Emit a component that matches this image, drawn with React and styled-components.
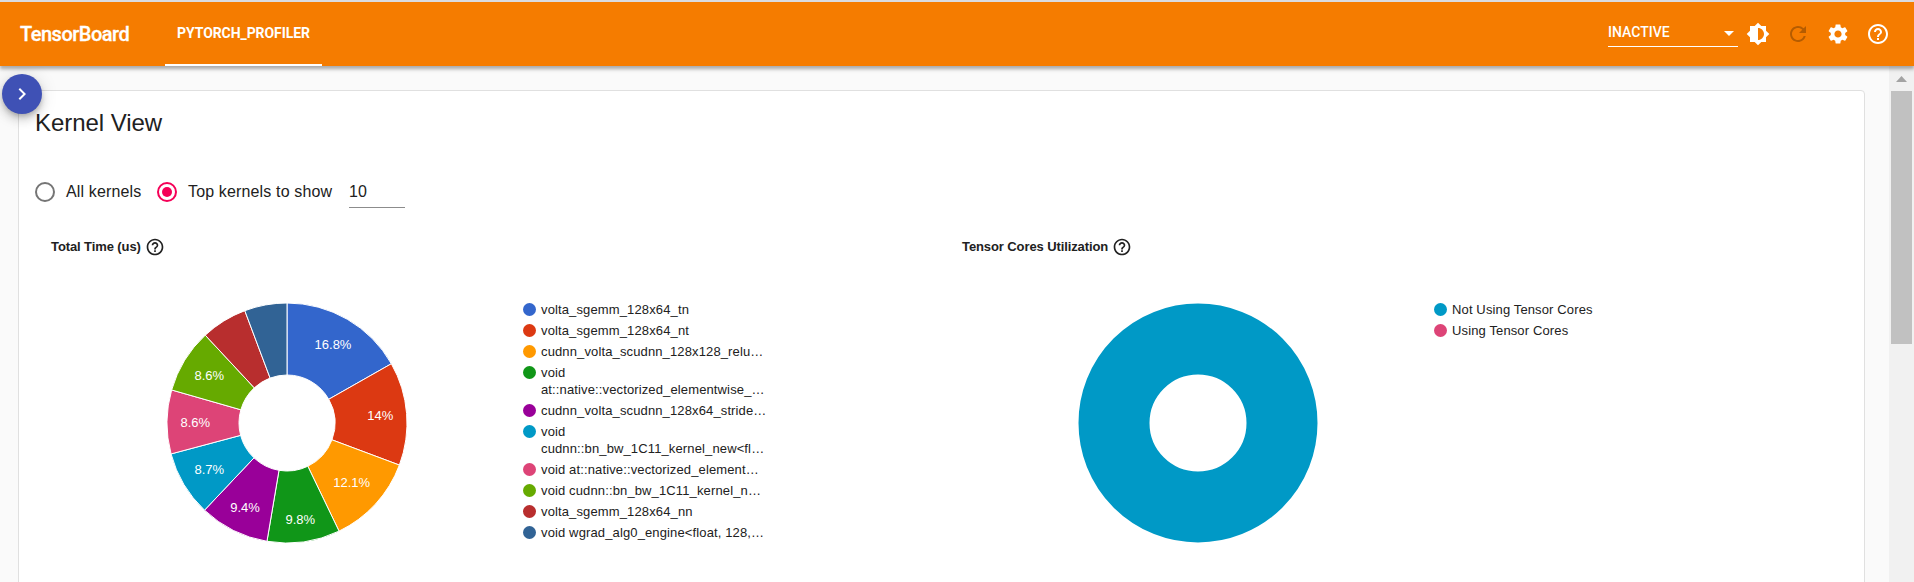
import React from "react";
import styled, { createGlobalStyle } from "styled-components";
import {
  MdBrightness6,
  MdRefresh,
  MdSettings,
  MdHelpOutline,
  MdChevronRight,
} from "react-icons/md";

const GlobalStyle = createGlobalStyle`
  * { box-sizing: border-box; }
  body {
    margin: 0;
    overflow: hidden;
    background: #fafafa;
    color: #212121;
    font-family: "Liberation Sans", Arial, sans-serif;
  }
`;

const Page = styled.div`
  display: flex;
  flex-direction: column;
  height: 582px;
  border-top: 2px solid #dadce0;
`;

const Header = styled.header`
  position: relative;
  z-index: 2;
  flex: none;
  display: flex;
  align-items: center;
  height: 64px;
  padding: 0 24px 0 20px;
  background: #f57c00;
  color: #fff;
  font-family: Roboto, sans-serif;
  box-shadow: 0 3px 3px rgba(0, 0, 0, 0.25), 0 4px 5px rgba(0, 0, 0, 0.08);
`;

const Brand = styled.div`
  width: 145px;
  font-size: 20px;
  font-weight: 500;
  line-height: 24px;
  letter-spacing: -0.5px;
  -webkit-text-stroke: 0.3px #fff;
`;

const Tab = styled.div`
  display: flex;
  align-items: center;
  justify-content: center;
  width: 157px;
  height: 64px;
  border-bottom: 2px solid #fff;
  font-size: 14px;
  font-weight: 700;
  letter-spacing: -0.07px;
`;

const Select = styled.div`
  display: flex;
  align-items: center;
  justify-content: space-between;
  width: 130px;
  height: 29px;
  margin: 0 8px 3px auto;
  padding-right: 4px;
  border-bottom: 1px solid #fff;
  font-size: 14px;
  font-weight: 500;
`;

const Caret = styled.span`
  border: 5px solid transparent;
  border-top-color: #fff;
  border-bottom: 0;
  margin-top: 3px;
`;

const Actions = styled.div`
  display: flex;
  gap: 16px;
`;

const Action = styled.span`
  display: flex;
  font-size: 24px;
  color: ${(p) => (p.$disabled ? "rgba(0, 0, 0, 0.26)" : "#fff")};
`;

const Body = styled.div`
  position: relative;
  flex: 1;
  display: flex;
  min-height: 0;
`;

const Main = styled.main`
  flex: 1;
  padding: 24px 24px 0 18px;
`;

const Card = styled.section`
  height: 520px;
  padding: 16px 17px 0 16px;
  border: 1px solid #e0e0e0;
  border-radius: 4px;
  background: #fff;
`;

const Title = styled.h1`
  margin: 0;
  font-size: 24px;
  font-weight: 400;
  line-height: 32px;
  letter-spacing: -0.05px;
`;

const Controls = styled.div`
  display: flex;
  align-items: center;
  height: 34px;
  margin-top: 36px;
  font-size: 16px;
  letter-spacing: 0.15px;
`;

const Radio = styled.span`
  display: grid;
  place-items: center;
  width: 20px;
  height: 20px;
  border: 2px solid ${(p) => (p.$on ? "#f50057" : "#757575")};
  border-radius: 50%;
  &::after {
    content: "";
    width: 10px;
    height: 10px;
    border-radius: 50%;
    background: ${(p) => (p.$on ? "#f50057" : "transparent")};
  }
`;

const RadioGroup = styled.label`
  display: flex;
  align-items: center;
  gap: 11px;
  width: ${(p) => p.$w}px;
`;

const NumberField = styled.div`
  width: 56px;
  height: 32px;
  border-bottom: 1px solid #8c8c8c;
  line-height: 31px;
`;

const Charts = styled.div`
  display: grid;
  grid-template-columns: 911px 1fr;
  padding: 28px 0 0 16px;
`;

const ChartTitle = styled.div`
  display: flex;
  align-items: center;
  gap: 4px;
  height: 20px;
  font-size: 13px;
  font-weight: 700;
  letter-spacing: -0.1px;
  svg { font-size: 20px; }
`;

const ChartName = styled.span`
  padding-bottom: 2px;
`;

const ChartBody = styled.div`
  display: flex;
  align-items: flex-start;
  padding: 46px 0 0 116px;
`;

const Donut = styled.svg`
  flex: none;
  width: 240px;
  height: 240px;
  font-size: 13px;
`;

const Legend = styled.ul`
  margin: 0 0 0 116px;
  padding: 0;
  list-style: none;
  font-size: 13px;
  line-height: 17px;
  letter-spacing: 0.13px;
`;

const LegendItem = styled.li`
  display: flex;
  gap: 5px;
  margin-bottom: 4px;
  white-space: pre;
`;

const Dot = styled.span`
  flex: none;
  width: 13px;
  height: 13px;
  border-radius: 50%;
  background: ${(p) => p.$color};
`;

const LegendText = styled.span`
  margin-top: -2px;
  margin-bottom: 2px;
`;

const Fab = styled.button`
  position: absolute;
  z-index: 1;
  left: 2px;
  top: 8px;
  display: grid;
  place-items: center;
  width: 40px;
  height: 40px;
  padding: 0;
  border: 0;
  border-radius: 50%;
  background: #3f51b5;
  color: #fff;
  font-size: 24px;
  box-shadow: 0 3px 5px -1px rgba(0, 0, 0, 0.2), 0 6px 10px rgba(0, 0, 0, 0.14),
    0 1px 18px rgba(0, 0, 0, 0.12);
`;

const Scrollbar = styled.div`
  flex: none;
  display: flex;
  flex-direction: column;
  align-items: center;
  width: 25px;
  padding-top: 10px;
  background: #f1f1f1;
`;

const ScrollArrow = styled.svg`
  width: 11px;
  height: 6px;
  margin-bottom: 9px;
`;

const Thumb = styled.div`
  width: 21px;
  height: 253px;
  background: #c1c1c1;
`;

const KERNELS = [
  { name: "volta_sgemm_128x64_tn", color: "#3366cc", end: 16.78, label: "16.8%", x: 166, y: 46 },
  { name: "volta_sgemm_128x64_nt", color: "#dc3912", end: 30.7, label: "14%", x: 213.3, y: 117 },
  { name: "cudnn_volta_scudnn_128x128_relu…", color: "#ff9900", end: 42.86, label: "12.1%", x: 184.7, y: 184 },
  { name: "void\nat::native::vectorized_elementwise_…", color: "#109618", end: 52.67, label: "9.8%", x: 133.3, y: 221 },
  { name: "cudnn_volta_scudnn_128x64_stride…", color: "#990099", end: 62.06, label: "9.4%", x: 78, y: 209 },
  { name: "void\ncudnn::bn_bw_1C11_kernel_new<fl…", color: "#0099c6", end: 70.85, label: "8.7%", x: 42.3, y: 171 },
  { name: "void at::native::vectorized_element…", color: "#dd4477", end: 79.44, label: "8.6%", x: 28.3, y: 124 },
  { name: "void cudnn::bn_bw_1C11_kernel_n…", color: "#66aa00", end: 88.07, label: "8.6%", x: 42.3, y: 77 },
  { name: "volta_sgemm_128x64_nn", color: "#b82e2e", end: 94.28 },
  { name: "void wgrad_alg0_engine<float, 128,…", color: "#316395", end: 100 },
];

const CORES = [
  { name: "Not Using Tensor Cores", color: "#0099c6" },
  { name: "Using Tensor Cores", color: "#dd4477" },
];

const point = (pct, r) => {
  const a = (pct / 100) * Math.PI * 2;
  return `${120 + r * Math.sin(a)} ${120 - r * Math.cos(a)}`;
};

const slicePath = (from, to) =>
  `M${point(from, 48)}L${point(from, 120)}A120 120 0 0 1 ${point(to, 120)}` +
  `L${point(to, 48)}A48 48 0 0 0 ${point(from, 48)}Z`;

function ChartLegend({ items }) {
  return (
    <Legend>
      {items.map((item) => (
        <LegendItem key={item.name}>
          <Dot $color={item.color} />
          <LegendText>{item.name}</LegendText>
        </LegendItem>
      ))}
    </Legend>
  );
}

function ChartPanel({ title, items, children }) {
  return (
    <div>
      <ChartTitle>
        <ChartName>{title}</ChartName>
        <MdHelpOutline />
      </ChartTitle>
      <ChartBody>
        <Donut viewBox="0 0 240 240">{children}</Donut>
        <ChartLegend items={items} />
      </ChartBody>
    </div>
  );
}

export default function App() {
  return (
    <>
      <GlobalStyle />
      <Page>
        <Header>
          <Brand>TensorBoard</Brand>
          <Tab>PYTORCH_PROFILER</Tab>
          <Select>
            INACTIVE
            <Caret />
          </Select>
          <Actions>
            <Action><MdBrightness6 /></Action>
            <Action $disabled><MdRefresh /></Action>
            <Action><MdSettings /></Action>
            <Action><MdHelpOutline /></Action>
          </Actions>
        </Header>
        <Body>
          <Fab><MdChevronRight /></Fab>
          <Main>
            <Card>
              <Title>Kernel View</Title>
              <Controls>
                <RadioGroup $w={122}>
                  <Radio />
                  All kernels
                </RadioGroup>
                <RadioGroup $w={192}>
                  <Radio $on />
                  Top kernels to show
                </RadioGroup>
                <NumberField>10</NumberField>
              </Controls>
              <Charts>
                <ChartPanel title="Total Time (us)" items={KERNELS}>
                  {KERNELS.map((k, i) => (
                    <path
                      key={k.name}
                      d={slicePath(i ? KERNELS[i - 1].end : 0, k.end)}
                      fill={k.color}
                      stroke="#fff"
                    />
                  ))}
                  {KERNELS.filter((k) => k.label).map((k) => (
                    <text key={k.name} x={k.x} y={k.y} fill="#fff" textAnchor="middle">
                      {k.label}
                    </text>
                  ))}
                </ChartPanel>
                <ChartPanel title="Tensor Cores Utilization" items={CORES}>
                  <circle cx="120" cy="120" r="84" fill="none" stroke="#0099c6" strokeWidth="71" />
                </ChartPanel>
              </Charts>
            </Card>
          </Main>
          <Scrollbar>
            <ScrollArrow viewBox="0 0 11 6">
              <path d="M5.5 0L11 6H0Z" fill="#a3a3a3" />
            </ScrollArrow>
            <Thumb />
          </Scrollbar>
        </Body>
      </Page>
    </>
  );
}
